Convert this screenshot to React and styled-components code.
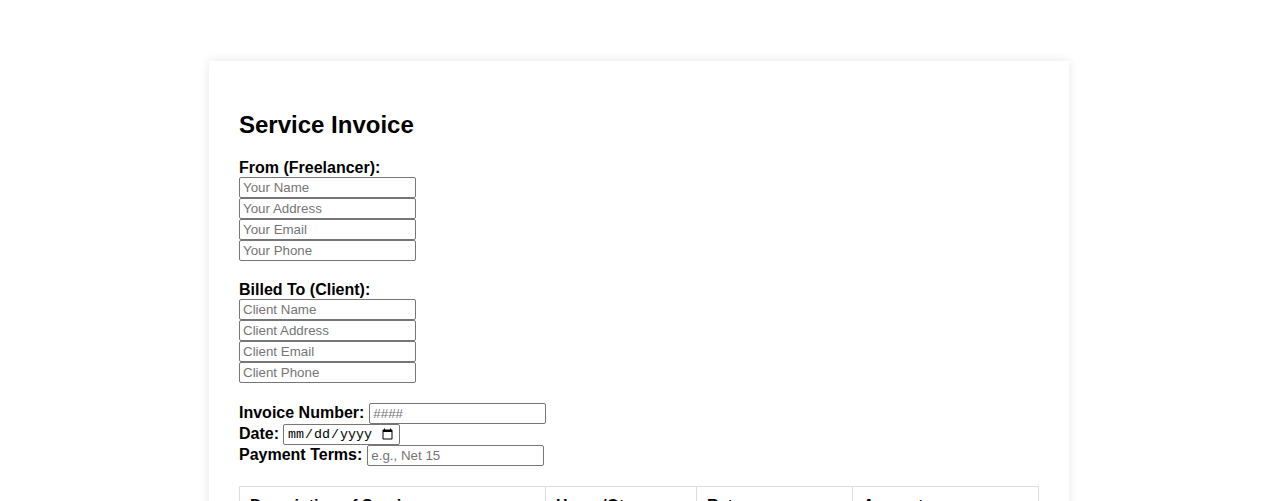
import React from 'react';
import styled, { createGlobalStyle } from 'styled-components';

const GlobalStyle = createGlobalStyle`
    body {
        margin: 0;
        padding: 0;
        background: #ffffff;
        font-family: "Liberation Sans", Arial, sans-serif;
        color: #000;
    }
`;

const Page = styled.div`
    padding: 61px 0 40px 0;
`;

const Card = styled.div`
    width: 800px;
    margin: 0 auto;
    padding: 30px;
    background: #fff;
    box-shadow: 0 0 10px rgba(0, 0, 0, 0.1);
`;

const Title = styled.h2`
    font-size: 24px;
    font-weight: bold;
    margin: 19.92px 0;
`;

const Section = styled.div`
    margin-bottom: 20px;
`;

const Label = styled.label`
    display: block;
    font-size: 16px;
    font-weight: bold;
`;

const Input = styled.input`
    display: ${props => props.inline ? "inline-block" : "block"};
    width: ${props => props.w ? props.w : "177px"};
    height: 21px;
    box-sizing: border-box;
    font-family: ${props => props.mono ? '"Liberation Mono", monospace' : '"Liberation Sans", Arial, sans-serif'};
    font-size: 13.33px;
    padding: 1px 3px;
    margin: 0;
    border: 1px solid #767676;
    border-radius: 2px;
    color: #000;

    &::placeholder {
        color: #757575;
    }
`;

const Row = styled.div`
    display: flex;
    align-items: center;
    gap: ${props => props.gap ? props.gap : "4px"};
    height: 21px;
`;

const RowLabel = styled.label`
    font-size: 16px;
    font-weight: bold;
`;

const Table = styled.table`
    width: 800px;
    border-collapse: collapse;
    table-layout: fixed;
`;

const Th = styled.th`
    width: ${props => props.w};
    border: 1px solid #ddd;
    padding: 10px;
    text-align: left;
    font-size: 16px;
    font-weight: bold;
`;

const Td = styled.td`
    border: 1px solid #ddd;
    padding: 10px;
    font-size: 16px;
`;

const App = () => {
    return <>
        <GlobalStyle />
        <Page>
            <Card>
                <Title>Service Invoice</Title>
                <Section>
                    <Label>From (Freelancer):</Label>
                    <Input placeholder="Your Name" />
                    <Input placeholder="Your Address" />
                    <Input placeholder="Your Email" />
                    <Input placeholder="Your Phone" />
                </Section>
                <Section>
                    <Label>Billed To (Client):</Label>
                    <Input placeholder="Client Name" />
                    <Input placeholder="Client Address" />
                    <Input placeholder="Client Email" />
                    <Input placeholder="Client Phone" />
                </Section>
                <Section>
                    <Row gap="5px">
                        <RowLabel>Invoice Number:</RowLabel>
                        <Input inline placeholder="####" />
                    </Row>
                    <Row>
                        <RowLabel>Date:</RowLabel>
                        <Input inline mono type="date" w="117px" />
                    </Row>
                    <Row gap="5px">
                        <RowLabel>Payment Terms:</RowLabel>
                        <Input inline placeholder="e.g., Net 15" />
                    </Row>
                </Section>
                <Table>
                    <thead>
                        <tr>
                            <Th w="285px">Description of Services</Th>
                            <Th w="130px">Hours/Qty</Th>
                            <Th w="135px">Rate</Th>
                            <Th>Amount</Th>
                        </tr>
                    </thead>
                    <tbody>
                        <tr>
                            <Td>&nbsp;</Td>
                            <Td>&nbsp;</Td>
                            <Td>&nbsp;</Td>
                            <Td>&nbsp;</Td>
                        </tr>
                    </tbody>
                </Table>
            </Card>
        </Page>
    </>
}

export default App;
